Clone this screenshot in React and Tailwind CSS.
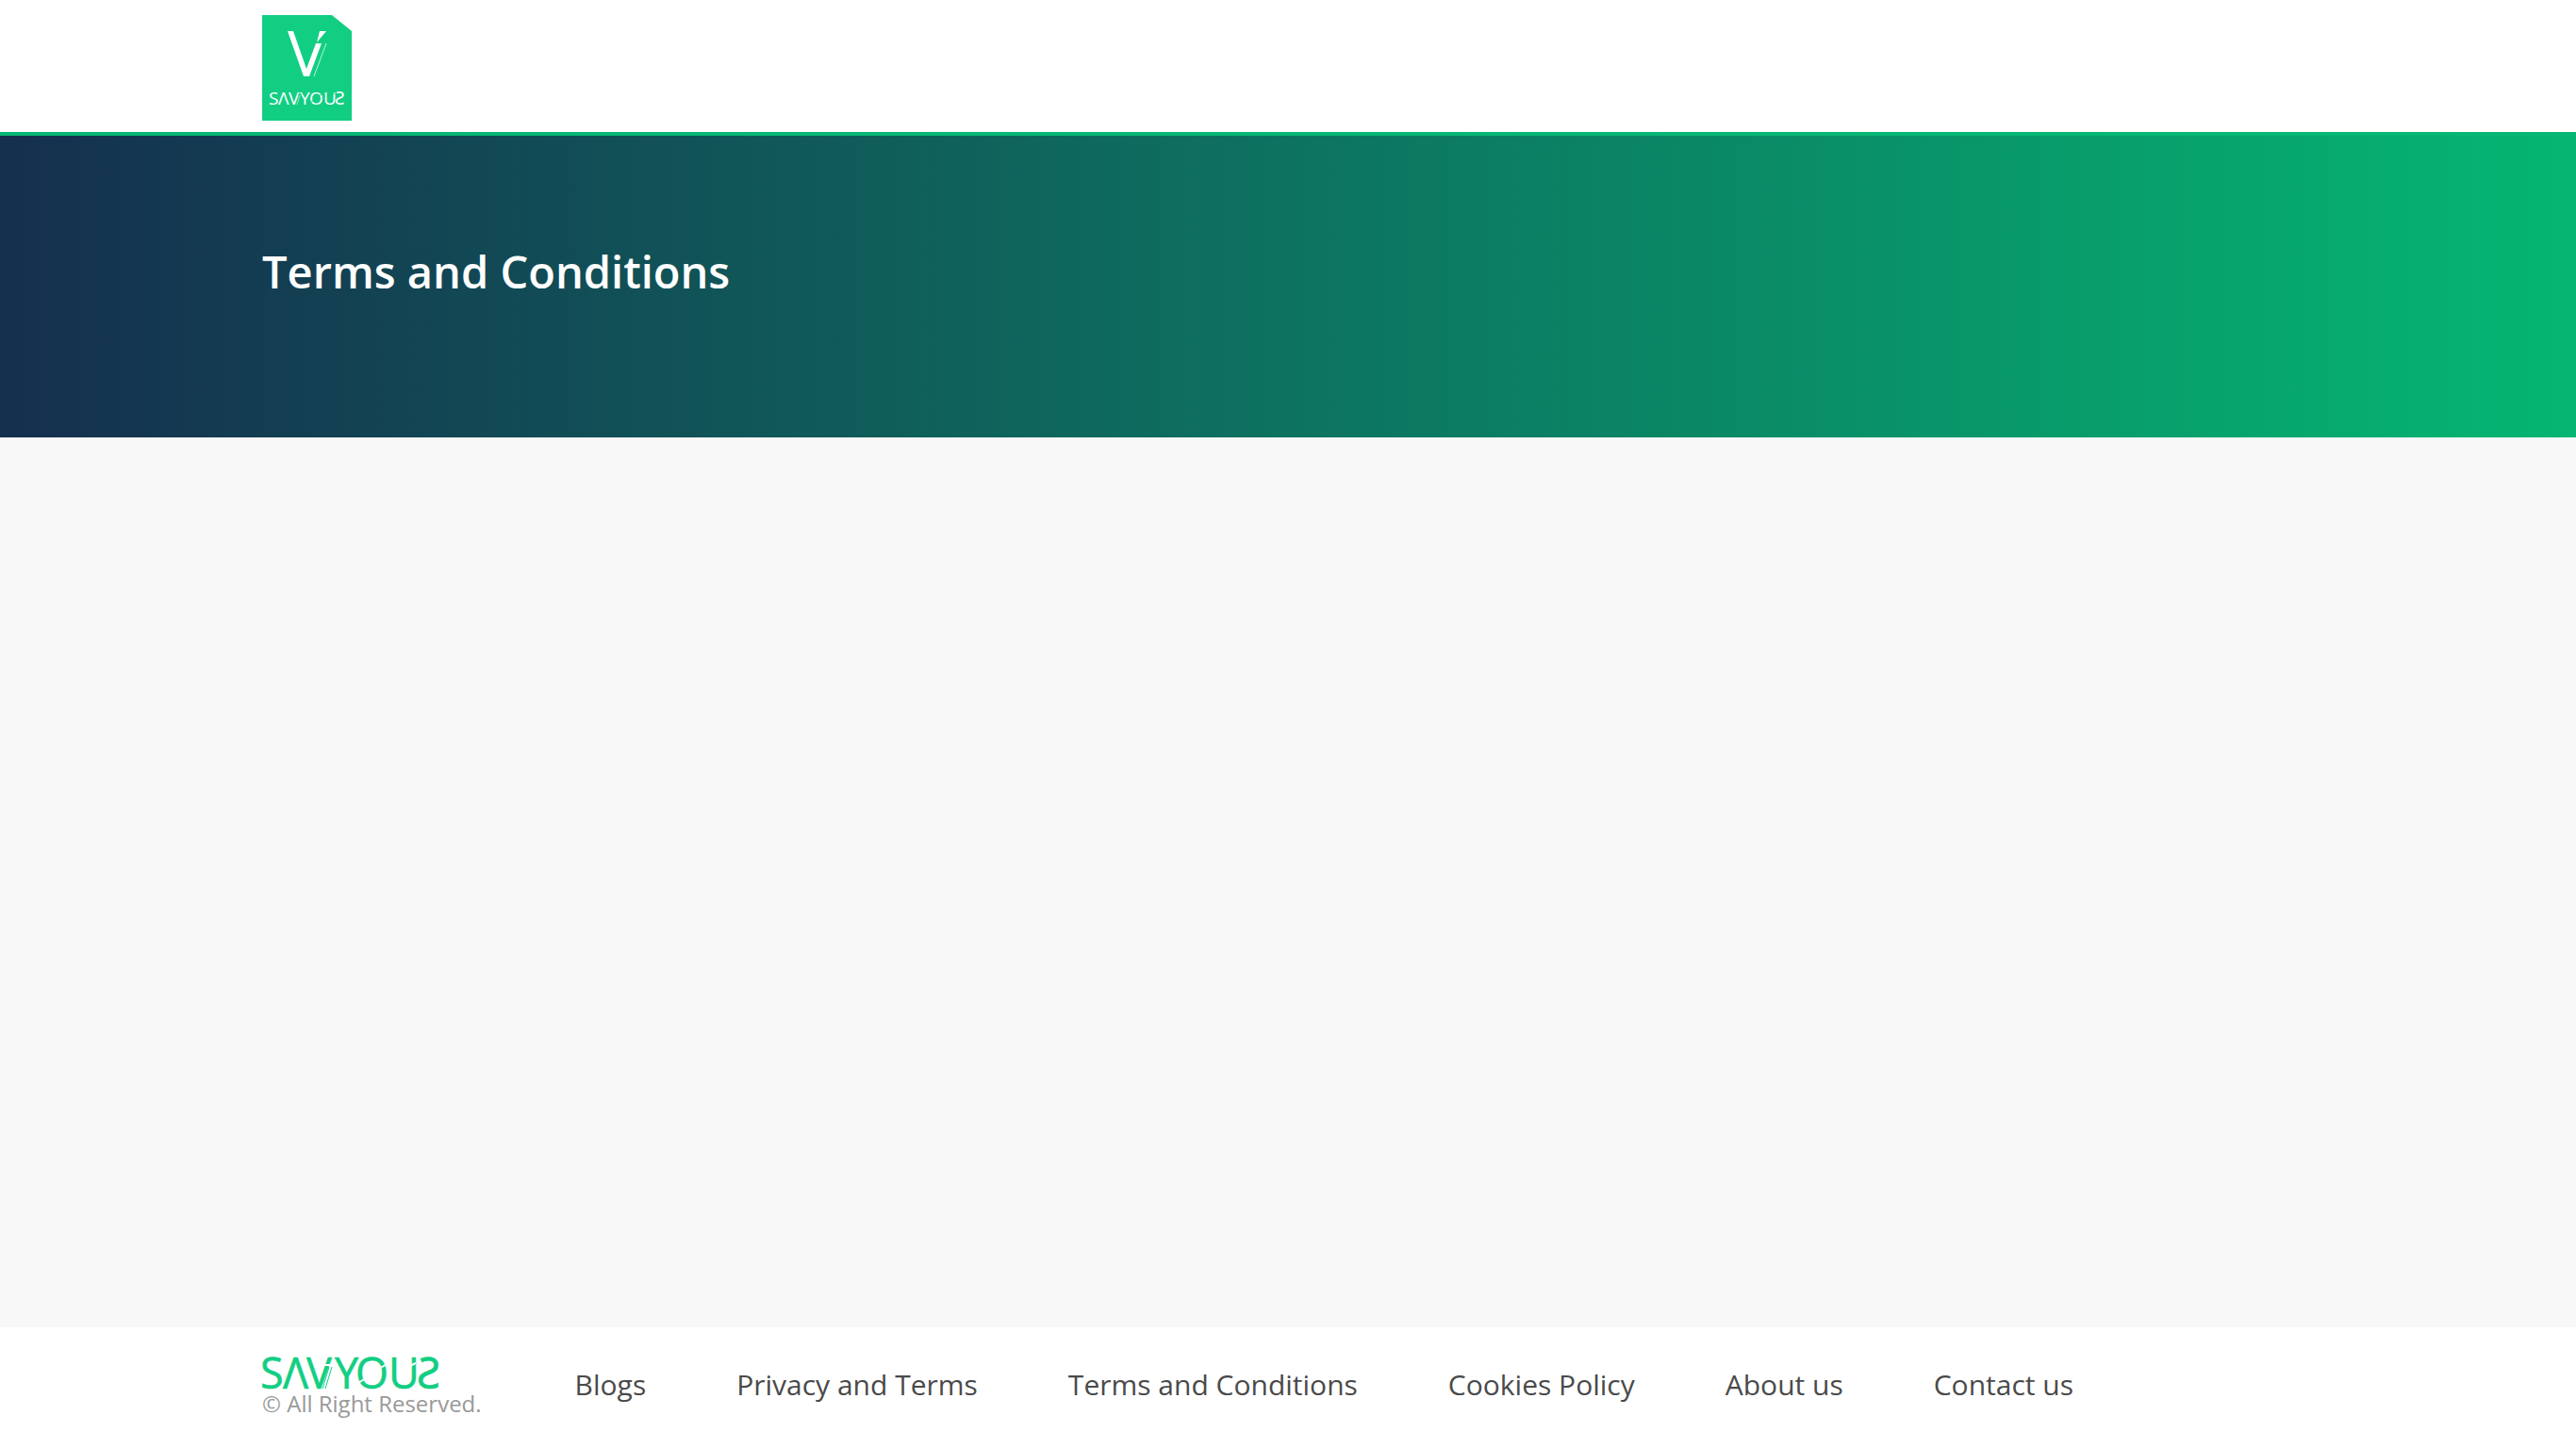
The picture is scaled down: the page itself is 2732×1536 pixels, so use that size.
const links = ["Blogs", "Privacy and Terms", "Terms and Conditions", "Cookies Policy", "About us", "Contact us"];

function Emblem() {
  return (
    <svg viewBox="0 0 95 112" className="h-28 w-[95px]" role="img" aria-label="Savyous">
      <path d="M0 0H74L95 17V112H0Z" fill="#12ce83" />
      <path d="M27 17H33L47 57L57 30H63L50 65H44Z" fill="#fff" />
      <path d="M61 17H68L58 29Z" fill="#fff" />
      <path d="M68 30L55 65" stroke="#fff" strokeWidth="0.7" />
      <text x="7 17 28 40 50 65 77" y="95" fill="#fff" fontSize="19">
        SΛVYOUƧ
      </text>
      <path d="M38 84L42 84.5M51 93L55 90M60 86L64 83M72 85L77 83" stroke="#12ce83" strokeWidth="1" />
      <path d="M40 85L37 95" stroke="#fff" strokeWidth="0.5" />
    </svg>
  );
}

function Wordmark() {
  return (
    <svg viewBox="0 0 188 32" className="h-8 w-[188px] overflow-visible" role="img" aria-label="Savyous">
      <text x="-2 22 47 77 99 134 164" y="32" fill="#12ce83" stroke="#12ce83" strokeWidth="0.6" fontSize="45">
        SΛVYOUƧ
      </text>
      <path d="M63 7H75M102 26L110 21M124 11L132 6M154 9L163 5" stroke="#fff" strokeWidth="2" />
      <path d="M72 8L63 32" stroke="#fff" strokeWidth="1" />
      <path d="M71 9L64 32M74 9L67 32" stroke="#12ce83" strokeWidth="1" />
    </svg>
  );
}

export default function App() {
  return (
    <div className="flex min-h-screen flex-col bg-[#f8f8f8] font-['Open_Sans','Noto_Sans',sans-serif]">
      <header className="flex border-b-4 border-[#07b774] bg-white px-[278px] pt-4 pb-3">
        <a href="#">
          <Emblem />
        </a>
      </header>
      <section className="bg-linear-to-r/srgb from-[#152f4e] to-[#05b672] px-[278px] pt-28 pb-36">
        <h1 className="text-[47px] leading-16 font-semibold text-white">Terms and Conditions</h1>
      </section>
      <main className="grow" />
      <footer className="flex items-start bg-white px-[278px] pt-[33px] pb-[31px]">
        <div className="mr-[99px]">
          <a href="#" className="flex">
            <Wordmark />
          </a>
          <p className="text-2xl leading-8 text-[#999]">© All Right Reserved.</p>
        </div>
        <nav className="flex gap-24 pt-2 text-3xl leading-10 text-[#4a4a4a]">
          {links.map((label) => (
            <a key={label} href="#">{label}</a>
          ))}
        </nav>
      </footer>
    </div>
  );
}
